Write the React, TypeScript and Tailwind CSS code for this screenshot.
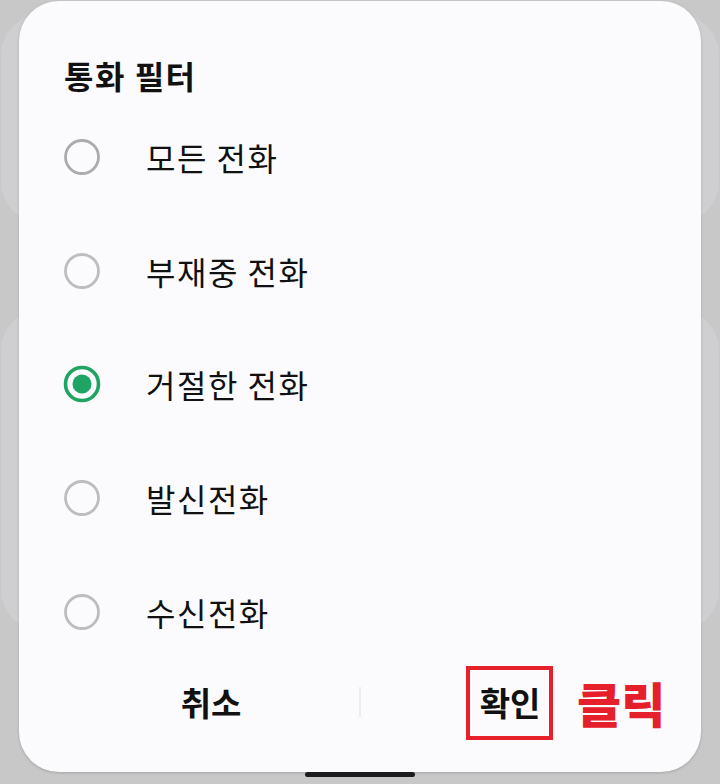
import React from "react";

const font = { fontFamily: '"Noto Sans CJK KR", "Noto Sans", sans-serif' };

function Radio({ checked, dark }: { checked?: boolean; dark?: boolean }) {
  return (
    <svg width="38" height="38" viewBox="0 0 38 38" className="shrink-0">
      {checked ? (
        <>
          <circle cx="19" cy="19" r="16.5" fill="none" stroke="#1fa463" strokeWidth="3.6" />
          <circle cx="19" cy="19" r="9.5" fill="#1fa463" />
        </>
      ) : (
        <circle cx="19" cy="19" r="16.5" fill="none" stroke={dark ? "#ababad" : "#bdbdbf"} strokeWidth="2.8" />
      )}
    </svg>
  );
}

const options = [
  { label: "모든 전화", checked: false, dark: true },
  { label: "부재중 전화", checked: false, dark: false },
  { label: "거절한 전화", checked: true, dark: false },
  { label: "발신전화", checked: false, dark: false },
  { label: "수신전화", checked: false, dark: false },
];

export default function App() {
  return (
    <div className="relative w-[720px] h-[784px] overflow-hidden bg-[#c8c8c9]" style={font}>
      {/* background content behind the dialog */}
      <div className="flex flex-col pt-[15px] gap-[88px]">
        <div className="h-[207px] mx-[1px] rounded-[40px] bg-[#cfcfd1]" />
        <div className="h-[320px] mx-[1px] rounded-[40px] bg-[#cfcfd1]" />
      </div>

      {/* dialog */}
      <div className="absolute left-[19px] top-[1px] w-[682px] h-[771px] rounded-[40px] bg-[#fbfbfd] shadow-[0_1px_3px_rgba(0,0,0,0.18)] flex flex-col">
        <div className="pt-[55px] pl-[45px] h-[99px]">
          <div className="text-[32px] leading-[38px] tracking-[1.5px] font-bold text-[#111]">통화 필터</div>
        </div>
        <div className="flex flex-col">
          {options.map((o) => (
            <div key={o.label} className="h-[113.75px] flex items-center pl-[44px] gap-[45px]">
              <Radio checked={o.checked} dark={o.dark} />
              <span className="text-[32px] leading-[38px] tracking-[1.5px] text-[#111]">{o.label}</span>
            </div>
          ))}
        </div>
        <div className="h-[66px] mx-[44px] flex items-center">
          <div className="flex-1 flex justify-center">
            <span className="text-[33px] leading-[38px] font-bold text-[#111]">취소</span>
          </div>
          <div className="w-[2px] h-[30px] bg-[#ececee]" />
          <div className="flex-1 flex justify-center">
            <span className="relative text-[33px] leading-[38px] font-bold text-[#111] pl-[2px]">
              확인
              <span className="absolute -top-[17px] -bottom-[19px] -left-[12px] -right-[13px] border-[4px] border-[#e5202a]" />
            </span>
          </div>
        </div>
      </div>

      {/* annotation */}
      <div className="absolute left-[577px] top-[674px] text-[48px] leading-[56px] font-black text-[#e5202a]">클릭</div>

      {/* home indicator */}
      <div className="absolute left-[305px] top-[772px] w-[110px] h-[5px] rounded-full bg-[#1b1b1b]" />
    </div>
  );
}
